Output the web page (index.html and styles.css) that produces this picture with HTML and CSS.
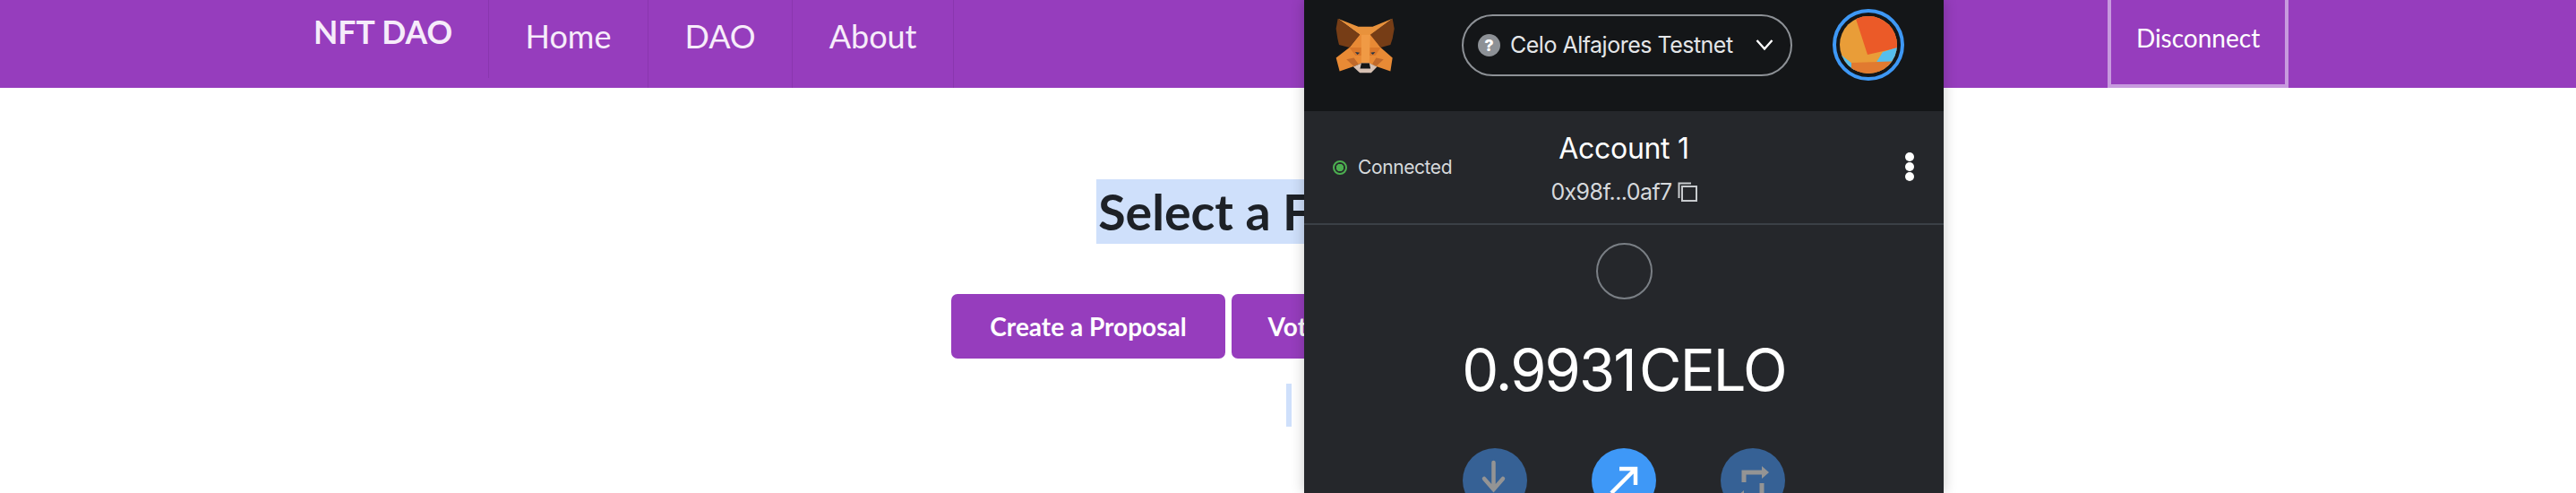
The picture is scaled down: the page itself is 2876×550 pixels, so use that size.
FILE: index.html
```html
<!DOCTYPE html>
<html lang="en">
<head>
<meta charset="utf-8">
<title>NFT DAO</title>
<link rel="stylesheet" href="styles.css">
</head>
<body>
<header class="nav">
  <a class="brand">NFT DAO</a>
  <ul class="links">
    <li class="link">Home</li>
    <li class="link">DAO</li>
    <li class="link">About</li>
  </ul>
  <div class="disconnect">Disconnect</div>
</header>
<main class="main">
  <h1 class="title"><span class="selected">Select a Function</span></h1>
  <div class="actions">
    <button class="btn">Create a Proposal</button>
    <button class="btn">Vote on Proposals</button>
    <button class="btn btn-last">Stats</button>
  </div>
  <div class="selection-row"><span class="caret-sel"></span></div>
</main>
<aside class="wallet">
  <div class="wallet-top">
    <svg class="fox" viewBox="55 50 205 195" aria-hidden="true">
      <polygon fill="#e88a35" points="105,155 140,110 178,110 210,155 250,190 243,235 195,218 170,208 145,208 120,218 72,235 60,190"/>
      <polygon fill="#e8923c" points="66,58 135,85 183,85 250,58 178,112 140,112"/>
      <polygon fill="#763d16" points="66,58 140,112 105,155 70,146 65,125 60,92"/>
      <polygon fill="#763d16" points="250,58 175,112 210,155 243,146 250,125 256,92"/>
      <polygon fill="#d9772a" points="105,155 145,155 145,182 125,182"/>
      <polygon fill="#d9772a" points="210,155 172,155 172,182 192,182"/>
      <polygon fill="#f09a45" points="145,112 175,112 172,208 145,208"/>
      <polygon fill="#c0692a" points="95,195 120,190 135,210 120,218"/>
      <polygon fill="#c0692a" points="220,195 195,190 182,210 195,218"/>
      <polygon fill="#233447" points="124,170 140,172 132,179"/>
      <polygon fill="#233447" points="192,170 176,172 184,179"/>
      <polygon fill="#d7c1b3" points="118,220 145,208 172,208 198,220 178,240 140,240"/>
      <polygon fill="#161616" points="145,208 172,208 176,226 141,226"/>
    </svg>
    <div class="network">
      <span class="unknown">?</span>
      <span class="network-name">Celo Alfajores Testnet</span>
      <svg class="chevron" viewBox="0 0 20 14" aria-hidden="true"><path d="M1.5 2 L10 11.5 L18.5 2" fill="none" stroke="#fff" stroke-width="2.4"/></svg>
    </div>
    <div class="avatar-ring">
      <svg class="avatar" viewBox="0 0 64 64" aria-hidden="true">
        <rect width="64" height="64" fill="#e99d38"/>
        <polygon fill="#eb5a28" points="17,0 70,0 70,34 31,43"/>
        <polygon fill="#55bfee" points="40,53 48,40 70,33 70,60"/>
        <polygon fill="#55bfee" points="0,42 14,53 20,70 0,70"/>
        <polygon fill="#e17a30" points="13,52 70,50 70,70 13,70"/>
      </svg>
    </div>
  </div>
  <div class="account-bar">
    <div class="status"><span class="status-dot"></span><span class="status-text">Connected</span></div>
    <div class="account">
      <div class="account-name">Account 1</div>
      <div class="address">0x98f...0af7
        <svg class="copy" viewBox="0 0 22 22" aria-hidden="true"><path d="M1.5 18 V1.5 H15" fill="none" stroke="#c8cbce" stroke-width="2"/><rect x="5" y="5" width="16" height="16" fill="none" stroke="#c8cbce" stroke-width="2"/></svg>
      </div>
    </div>
    <div class="kebab"><i></i><i></i><i></i></div>
  </div>
  <div class="balance-area">
    <div class="token-circle"></div>
    <div class="balance">0.9931 CELO</div>
    <div class="wallet-actions">
      <div class="round dim">
        <svg viewBox="0 0 72 72" aria-hidden="true"><path d="M34.500 16 V46 M24 34 L34.500 46 L45 34" fill="none" stroke="#949494" stroke-width="4.500" stroke-linecap="round"/></svg>
      </div>
      <div class="round">
        <svg viewBox="0 0 72 72" aria-hidden="true"><path d="M22 50 L48 24 M31 23 H49 V41" fill="none" stroke="#fff" stroke-width="4.500"/></svg>
      </div>
      <div class="round dim">
        <svg viewBox="0 0 72 72" aria-hidden="true"><path d="M26 38 V27 H46 M26 54 H46 V39" fill="none" stroke="#949494" stroke-width="5"/><polygon fill="#949494" points="46,20 54,27 46,34"/><polygon fill="#949494" points="26,47 18,54 26,61"/></svg>
      </div>
    </div>
  </div>
</aside>
</body>
</html>
```
FILE: styles.css
```css
html, body {
  margin: 0;
  padding: 0;
  height: 550px;
  overflow: hidden;
  background: #fff;
  font-family: "Lato", "Liberation Sans", sans-serif;
}

.nav {
  display: flex;
  align-items: flex-start;
  height: 98px;
  padding-left: 350px;
  background: #963dbd;
  color: #fff;
  box-sizing: border-box;
}

.brand {
  width: 196px;
  height: 87px;
  box-sizing: border-box;
  padding-top: 15px;
  border-right: 1px solid #8a36ae;
  font-size: 35.5px;
  line-height: 41px;
  font-weight: 700;
  color: #f6ecfa;
}

.links {
  display: flex;
  margin: 0;
  padding: 0;
  list-style: none;
}

.link {
  height: 98px;
  padding: 18px 40.5px 0;
  box-sizing: border-box;
  border-right: 1px solid #8a36ae;
  font-size: 36px;
  line-height: 44px;
  font-weight: 400;
  color: #f6ecfa;
}

.disconnect {
  margin-left: 1288px;
  width: 202px;
  height: 98px;
  box-sizing: border-box;
  padding-top: 25px;
  border: 4px solid #c79ade;
  border-top: 0;
  text-align: center;
  font-size: 28px;
  line-height: 34px;
  font-weight: 400;
}

.main {
  display: flex;
  flex-direction: column;
  align-items: center;
}

.title {
  margin: 102px 0 56px;
  font-size: 55.5px;
  line-height: 72px;
  font-weight: 700;
  color: #1d2127;
}

.selected {
  display: block;
  padding: 0 2.5px;
  background: #cfe0fb;
}

.actions {
  display: flex;
  gap: 7px;
}

.btn {
  height: 72px;
  width: 306px;
  padding: 0;
  border: 0;
  border-radius: 7px;
  background: #963dbd;
  color: #fff;
  font-family: inherit;
  font-size: 28px;
  font-weight: 700;
}

.btn-last {
  width: 126px;
}

.selection-row {
  margin-top: 28px;
  margin-left: 2px;
  height: 48px;
}

.caret-sel {
  display: block;
  width: 6px;
  height: 48px;
  background: #cfe0fb;
}

.wallet {
  position: absolute;
  top: 0;
  left: 1456px;
  width: 714px;
  height: 550px;
  display: flex;
  flex-direction: column;
  overflow: hidden;
  background: #25272b;
  box-shadow: 0 0 14px rgba(0, 0, 0, 0.22);
  font-family: "Inter", "Liberation Sans", sans-serif;
  color: #fff;
}

.wallet-top {
  display: flex;
  align-items: center;
  height: 124px;
  flex: none;
  padding: 0 44px 24px 34px;
  box-sizing: border-box;
  background: #141618;
}

.fox {
  width: 68px;
  height: 65px;
  flex: none;
}

.network {
  display: flex;
  align-items: center;
  width: 369px;
  height: 69px;
  margin-left: 74px;
  padding-left: 16px;
  box-sizing: border-box;
  border: 2.5px solid #8d9196;
  border-radius: 35px;
}

.unknown {
  width: 25px;
  height: 25px;
  border-radius: 50%;
  background: #8d9196;
  color: #fff;
  font-size: 18px;
  font-weight: 800;
  line-height: 25px;
  text-align: center;
  flex: none;
}

.network-name {
  margin-left: 11px;
  width: 274px;
  font-size: 25px;
  white-space: nowrap;
  color: #e4e6e8;
  letter-spacing: -0.5px;
}

.chevron {
  width: 20px;
  height: 14px;
  flex: none;
}

.avatar-ring {
  margin-left: auto;
  width: 80px;
  height: 80px;
  box-sizing: border-box;
  padding: 4px;
  border: 4px solid #3e98f5;
  border-radius: 50%;
  flex: none;
}

.avatar {
  display: block;
  width: 64px;
  height: 64px;
  border-radius: 50%;
}

.account-bar {
  position: relative;
  display: flex;
  align-items: center;
  justify-content: center;
  flex: none;
  height: 127px;
  box-sizing: border-box;
  border-bottom: 2px solid #3b4046;
}

.status {
  position: absolute;
  left: 32px;
  top: 50px;
  display: flex;
  align-items: center;
  gap: 12px;
}

.status-dot {
  width: 16px;
  height: 16px;
  box-sizing: border-box;
  border: 2px solid #4caf50;
  border-radius: 50%;
  background: radial-gradient(#4caf50 0 4px, transparent 4.500px);
}

.status-text {
  font-size: 21px;
  line-height: 26px;
  color: #d6d9dc;
  letter-spacing: -0.4px;
}

.account {
  display: flex;
  flex-direction: column;
  align-items: center;
  padding-top: 3px;
}

.account-name {
  font-size: 32px;
  line-height: 38px;
  font-weight: 400;
  letter-spacing: -0.3px;
}

.address {
  display: flex;
  align-items: center;
  gap: 6px;
  margin-top: 14px;
  font-size: 25px;
  line-height: 30px;
  color: #d6d9dc;
  letter-spacing: -0.6px;
}

.copy {
  width: 22px;
  height: 22px;
}

.kebab {
  position: absolute;
  right: 33px;
  top: 46px;
  display: flex;
  flex-direction: column;
  gap: 1px;
}

.kebab i {
  display: block;
  width: 10px;
  height: 10px;
  border-radius: 50%;
  background: #fff;
}

.balance-area {
  display: flex;
  flex-direction: column;
  align-items: center;
  padding-top: 20px;
}

.token-circle {
  width: 63px;
  height: 63px;
  box-sizing: border-box;
  border: 2px solid #7a7f85;
  border-radius: 50%;
}

.balance {
  margin-top: 40px;
  font-size: 65px;
  line-height: 78px;
  font-weight: 400;
  word-spacing: -12px;
  letter-spacing: -1.9px;
  white-space: nowrap;
}

.wallet-actions {
  display: flex;
  gap: 72px;
  margin-top: 48px;
}

.round {
  width: 72px;
  height: 72px;
  border-radius: 50%;
  background: #3e98f7;
}

.round.dim {
  background: #366195;
}

.round svg {
  display: block;
  width: 72px;
  height: 72px;
}
```
